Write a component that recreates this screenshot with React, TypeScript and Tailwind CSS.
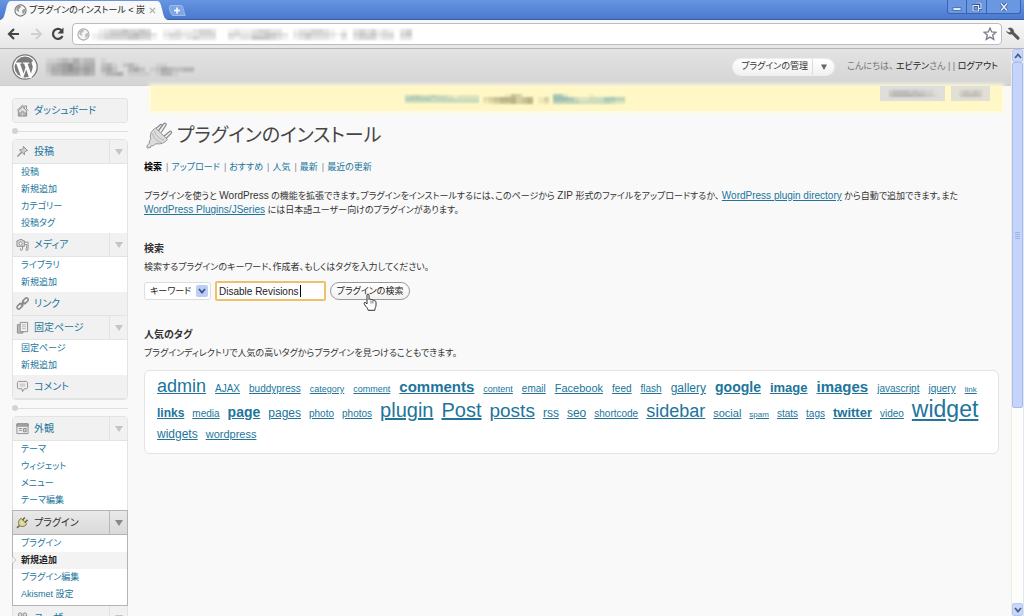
import React from "react";

const LINK = "text-[#21759b]";

/* ---------- icons ---------- */

function Globe({ faded = false }: { faded?: boolean }) {
  return (
    <svg viewBox="0 0 14 14" className="size-[13px] shrink-0" aria-hidden="true">
      <circle cx="7" cy="7" r="6" fill="#f4f4f4" stroke={faded ? "#aaa" : "#777"} strokeWidth="1.2" />
      <path d="M2.6 3.2 5.4 1.6 7.6 2.4 6.6 4.6 4.6 5.4 5.6 7 4.8 8.6 2.6 6.8ZM9 6.500 11.4 5.200 12.2 7 11 9.800 9.400 10.800 8.800 9Z" fill={faded ? "#bbb" : "#999"} />
    </svg>
  );
}

function WordPressLogo() {
  return (
    <svg viewBox="0 0 26 26" className="size-[26px] shrink-0" aria-hidden="true">
      <circle cx="13" cy="13" r="12.2" fill="#fdfdfd" stroke="#777" strokeWidth="1.3" />
      <circle cx="13" cy="13" r="10.4" fill="#7b7b7b" />
      <path
        d="M2.6 8.4h7v1.1l-1.5.2 3.4 9.8 2-6-1.4-3.8-1.3-.2V8.4h6.6v1.1l-1.8.2 3.4 9.8 1.5-5c1-3.2-1.2-4.3-.9-6 .2-1 .9-1.7 2-1.6l2.2 3.6c.4 1.8 0 3.6-.8 5.6l-3.6 8h-2.2L14.200 15.400 11.300 23.600H9.300L4.300 9.700l-1.700-.200Z"
        fill="#fdfdfd"
      />
    </svg>
  );
}

type IconName = "home" | "pin" | "media" | "link" | "pages" | "comment" | "layout" | "plug" | "users";

function MenuIcon({ name }: { name: IconName }) {
  const paths: Record<IconName, React.ReactNode> = {
    home: (
      <>
        <path d="M1 7 7 1.300 9.500 3.600V2h1.800v3.200L13 7" fill="none" />
        <path d="M2.500 7 7 2.800 11.500 7v6h-9Z" fill="#ddd" />
        <path d="M5.500 13V8.500h3V13M4 13V9M10 13V9" fill="none" />
      </>
    ),
    pin: (
      <>
        <path d="M8 1.500 12.500 6 11 6.300 9.300 8 9 10.500 3.800 5.200 6.300 4.900 7.900 3.200Z" fill="#ccc" />
        <path d="M6 7.800 1.500 12.500" fill="none" strokeWidth="1.400" />
      </>
    ),
    media: (
      <>
        <path d="M1 3h2l.6-1.300h3L7.200 3H9v6H1Z" fill="#ddd" />
        <circle cx="5" cy="6" r="1.800" fill="#fff" />
        <path d="M9 4.500h4v7.700a1.200 1.200 0 1 1-1.500-1.200V7H9M7 9v3.200a1.200 1.200 0 1 1-1.500-1.200" fill="none" />
      </>
    ),
    link: (
      <g fill="none" strokeWidth="1.700">
        <rect x="6.600" y="2.200" width="7" height="3.800" rx="1.900" transform="rotate(-45 10.100 4.100)" />
        <rect x="0.600" y="8" width="7" height="3.800" rx="1.900" transform="rotate(-45 4.100 9.900)" />
        <path d="m5 9 4-4" />
      </g>
    ),
    pages: (
      <>
        <path d="M1.500 4h6v9h-6Z" fill="#bbb" />
        <path d="M4.500 1.500h8v10h-8Z" fill="#eee" />
        <path d="M6.500 4h4M6.500 6h4M6.500 8h4" fill="none" stroke="#bbb" />
      </>
    ),
    comment: (
      <>
        <path d="M2.500 1.500h9l1 1v6l-1 1H9l-2 3-.6-3H2.500l-1-1v-6Z" fill="#eee" />
        <path d="M4 4.500h6M4 6.500h6" fill="none" stroke="#bbb" />
      </>
    ),
    layout: (
      <>
        <path d="M1 2h12v10.500H1Z" fill="#eee" />
        <path d="M1 2h12v2.500H1Z" fill="#aaa" />
        <path d="M8 7h3v3.500H8Z" fill="#ccc" />
        <path d="M3 7h3.500M3 9h3.500" fill="none" />
      </>
    ),
    plug: (
      <g stroke="#6b6844">
        <path d="M5.500 2.500 11.500 8.500C9.500 11.500 6 12 3.800 10.200 2 8 2.500 4.500 5.500 2.500Z" fill="#e3dc9a" />
        <path d="M7 4.500 9.500 1.500M9.500 7 12.500 4.200M3.800 10.200 1 12.800" fill="none" strokeWidth="1.700" />
      </g>
    ),
    users: (
      <>
        <circle cx="4.500" cy="4" r="2" fill="#ddd" />
        <circle cx="9.500" cy="4" r="2" fill="#ddd" />
        <path d="M1.500 12V8h5v4M7.500 12V8h5v4" fill="#ddd" />
      </>
    ),
  };
  return (
    <svg viewBox="0 0 14 14" className="size-[13px] shrink-0" stroke="#8a8a8a" strokeWidth="1" aria-hidden="true">
      {paths[name]}
    </svg>
  );
}

function PlugHeading() {
  return (
    <svg viewBox="0 0 27 27" className="size-[27px] shrink-0" aria-hidden="true">
      <path d="M12.500 9 18 1.500c1-1 2.800.3 2 1.600l-4.800 7.400M17.500 14.500l6.200-5c1.200-.8 2.500.7 1.500 1.800L19.500 17M9.500 7l5-4.500c1-.6 2 .4 1.400 1.400L12 9" fill="#f3f3f3" stroke="#8a8a8a" strokeWidth="1.200" />
      <path d="M9.500 6 21.500 17.500c-3 3.500-7 5-11.500 4.200L7.500 23.500l-2.500.5-.5 1.500L1 26l.3-2.800 1.900-1.600.5-3.300 1-1C3.500 12.500 5.500 8.500 9.500 6Z" fill="#dcdcdc" stroke="#959595" strokeWidth="1" />
      <path d="M6.500 11.500c1 4.500 4.500 8 9 9M8.500 9c1 4.500 5 8 9.500 9" fill="none" stroke="#b2b2b2" />
    </svg>
  );
}

/* Pixelated strips: each digit is the darkness of one block. */
function Mosaic({ rows, color, className }: { rows: string[]; color: string; className: string }) {
  const cols = rows[0].length;
  return (
    <svg viewBox={`0 0 ${cols} ${rows.length}`} preserveAspectRatio="none" className={className} shapeRendering="crispEdges" aria-hidden="true">
      {rows.flatMap((row, y) =>
        row.split("").map((d, x) =>
          d === "0" ? null : <rect key={`${x}-${y}`} x={x} y={y} width="1" height="1" fill={color} opacity={Number(d) / 10} />,
        ),
      )}
    </svg>
  );
}

/* ---------- browser chrome ---------- */

function TitleBar() {
  return (
    <div className="flex h-5 shrink-0 items-start justify-between border-b border-[#3a5f9f] bg-gradient-to-b from-[#6795e2] to-[#4a79cf]">
      <div className="relative z-10 flex h-5">
        <svg viewBox="0 0 168 20" className="absolute left-0 top-0 h-5 w-[168px]" aria-hidden="true">
          <path d="M0 20C4 19 4.500 15 6 9 7.500 3 8 1.500 11 1h146c3 .5 3.500 2 5 8 1.500 6 2 10 6 11Z" fill="#f8f8f8" />
        </svg>
        <div className="relative flex h-5 w-[168px] items-center pl-[14px]">
          <Globe />
          <span className="ml-[2px] w-[116px] overflow-hidden whitespace-nowrap text-[9px] leading-4 text-[#222]">プラグインのインストール &lt; 炭酸</span>
          <button aria-label="タブを閉じる" className="ml-1 text-[#aaa]">
            <svg viewBox="0 0 8 8" className="size-[7px]"><path d="m1 1 6 6M7 1 1 7" stroke="currentColor" strokeWidth="1.400" /></svg>
          </button>
        </div>
        <button aria-label="新しいタブ" className="relative mt-[5px] h-[11px] w-[18px]">
          <svg viewBox="0 0 18 11" className="h-[11px] w-[18px]">
            <path d="M2.500.5h11c1.500 0 3 10 4 10H5C2.500 10.500 0 .5 2.500.5Z" fill="#7ea5e6" stroke="#a9c4f0" strokeWidth=".8" />
            <path d="M9 2.500v6M6 5.500h6" stroke="#fff" strokeWidth="1.600" />
          </svg>
        </button>
      </div>
      <div className="mr-[3px] flex h-[14px] divide-x divide-[#3a62ad] rounded-b-[3px] border border-t-0 border-[#3a62ad] bg-[#6a97e2] text-[#e8effc]">
        <button aria-label="最小化" className="flex w-[19px] items-center justify-center">
          <svg viewBox="0 0 10 10" className="size-[10px]"><path d="M1 5.500h8v3H1Z" fill="#dfe9fb" stroke="#3f63a5" strokeWidth=".8" /></svg>
        </button>
        <button aria-label="元に戻す" className="flex w-5 items-center justify-center">
          <svg viewBox="0 0 10 10" className="size-[10px]"><path d="M3.500 1H9v5.500H7M1 3.500h5.500V9H1Z" fill="none" stroke="#2f5296" strokeWidth="2.400" /><path d="M3.500 1H9v5.500H7M1 3.500h5.500V9H1Z" fill="none" stroke="#e3ecfc" strokeWidth="1.200" /></svg>
        </button>
        <button aria-label="閉じる" className="flex w-[33px] items-center justify-center">
          <svg viewBox="0 0 10 10" className="size-[10px]"><path d="m2 1.500 6 7M8 1.500l-6 7" stroke="#2f5296" strokeWidth="3" /><path d="m2 1.500 6 7M8 1.500l-6 7" stroke="#e3ecfc" strokeWidth="1.700" /></svg>
        </button>
      </div>
    </div>
  );
}

function Toolbar() {
  return (
    <div className="flex h-[29px] shrink-0 items-center border-b border-[#b5b5b5] bg-gradient-to-b from-[#f8f8f8] to-[#e6e6e6] pl-[7px] pr-1">
      <button aria-label="戻る" className="w-[22px]">
        <svg viewBox="0 0 14 12" className="h-3 w-[14px]"><path d="M7 1 2 6l5 5M2.500 6H12" fill="none" stroke="#444" strokeWidth="2.200" /></svg>
      </button>
      <button aria-label="進む" className="w-[22px]">
        <svg viewBox="0 0 14 12" className="h-3 w-[14px]"><path d="m7 1 5 5-5 5M11.500 6H2" fill="none" stroke="#d0d0d0" strokeWidth="2" /></svg>
      </button>
      <button aria-label="再読み込み" className="w-[21px]">
        <svg viewBox="0 0 14 14" className="size-[14px]"><path d="M11.500 9A5 5 0 1 1 10.500 3.300" fill="none" stroke="#444" strokeWidth="2.200" /><path d="M12.500.5v6h-6Z" fill="#444" /></svg>
      </button>
      <div className="flex h-[22px] flex-1 items-center rounded-[4px] border border-[#bdbdbd] bg-white pl-1 pr-1">
        <Globe faded />
        <Mosaic
          className="ml-[2px] h-[11px] w-[320px] blur-[1px]"
          color="#777"
          rows={["012334334300112112332001211233220012233210102323121023", "123444454420233222333003322334432023433321303434233034", "123333443310122123222002122444321012322210202333122022"]}
        />
        <span className="flex-1" />
        <button aria-label="ブックマーク">
          <svg viewBox="0 0 14 14" className="size-[14px]"><path d="m7 1 1.700 4 4.300.3-3.300 2.800 1.100 4.300L7 10.100l-3.800 2.300 1.100-4.300L1 5.300 5.300 5Z" fill="#fff" stroke="#7b7b8b" strokeWidth="1.300" /></svg>
        </button>
      </div>
      <button aria-label="設定" className="ml-1">
        <svg viewBox="0 0 14 14" className="size-[14px]"><path d="M2.200 1.500 5 4l-.8 1.500H1L.8 4.200C1.500 6.800 4 7.600 6 6.900l5 5.300c1.600.7 2.700-.4 2-2L7.800 5.300C8 3 6.500 1 4.200.9Z" fill="#555" stroke="#555" strokeWidth=".6" /></svg>
      </button>
    </div>
  );
}

function Scrollbar() {
  const arrow = "flex h-[13px] shrink-0 items-center justify-center rounded-[2px] border border-[#b5c8f0] bg-[#c8d7fb]";
  return (
    <div className="flex w-[13px] shrink-0 flex-col border-l border-r border-l-[#ececec] border-r-[#dfe8fb] bg-[#fdfdf9]">
      <button aria-label="上へ" className={arrow}>
        <svg viewBox="0 0 8 6" className="h-[6px] w-2"><path d="m1 5 3-3.500L7 5" fill="none" stroke="#4d6185" strokeWidth="1.800" /></svg>
      </button>
      <div className="flex min-h-0 flex-1 flex-col">
        <div className="flex h-[64%] items-center justify-center rounded-[2px] border border-[#a9bdec] bg-[#c4d4fb]">
          <svg viewBox="0 0 5 7" className="h-[7px] w-[5px]"><path d="M0 .5h5M0 2.500h5M0 4.500h5M0 6.500h5" stroke="#9db4ea" /></svg>
        </div>
      </div>
      <button aria-label="下へ" className={arrow}>
        <svg viewBox="0 0 8 6" className="h-[6px] w-2"><path d="m1 1 3 3.500L7 1" fill="none" stroke="#4d6185" strokeWidth="1.800" /></svg>
      </button>
    </div>
  );
}

/* ---------- admin header ---------- */

function AdminHeader() {
  return (
    <header className="flex h-[37px] shrink-0 items-center border-b border-[#cfcfcf] bg-gradient-to-b from-[#e3e3e3] to-[#d4d4d4] pl-3 pr-[13px] text-[9px]">
      <WordPressLogo />
      <Mosaic
        className="ml-2 h-[18px] w-[148px] blur-[1px]"
        color="#666"
        rows={["112324233010000000000000000", "234564344023102310001100000", "244565454034200342012432233", "133444343013340111101331000"]}
      />
      <span className="flex-1" />
      <div className="flex h-[18px] items-center rounded-full border border-[#eee] bg-gradient-to-b from-white to-[#f1f1f1]">
        <a href="#manage" className="w-[79px] whitespace-nowrap pl-2 text-[#333]">プラグインの管理</a>
        <button aria-label="お気に入りを開く" className="flex h-4 w-[22px] items-center justify-center border-l border-[#ddd]">
          <svg viewBox="0 0 6 6" className="size-[6px]"><path d="M0 .5h6L3 6Z" fill="#666" /></svg>
        </button>
      </div>
      <p className="ml-3 whitespace-nowrap text-[#777]">
        こんにちは、 <a href="#profile" className="text-[#222]">エビテン</a>さん | | <a href="#logout" className="text-[#222]">ログアウト</a>
      </p>
    </header>
  );
}

/* ---------- sidebar ---------- */

type Section = { icon: IconName; title: string; items?: string[]; active?: boolean; current?: string };

function MenuHead({ icon, title, items, active }: Section) {
  return (
    <div className={active ? "flex h-[25px] items-center border-y border-[#b3b3b3] bg-gradient-to-b from-[#e9e9e9] to-[#dadada] pl-[3px]" : "flex h-6 items-center border-b border-[#e3e3e3] bg-[#f1f1f1] pl-[3px]"}>
      <MenuIcon name={icon} />
      <a href={`#${icon}`} className={`ml-[5px] flex-1 whitespace-nowrap text-[10px] leading-4 ${active ? "text-[#333]" : LINK}`}>{title}</a>
      {items && (
        <button aria-label={`${title}を開閉`} className={`flex h-full w-[18px] items-center justify-center border-l ${active ? "border-[#b9b9b9] text-[#888]" : "border-[#e2e2e2] text-[#c4c4c4]"}`}>
          <svg viewBox="0 0 8 6" className="h-[6px] w-2"><path d="M0 0h8L4 6Z" fill="currentColor" /></svg>
        </button>
      )}
    </div>
  );
}

function MenuSection(s: Section) {
  return (
    <li className={s.active ? "-mx-px border-x border-b border-[#b3b3b3]" : ""}>
      <MenuHead {...s} />
      {s.items && (
        <ul className={`bg-white ${s.active ? "pb-[2px]" : "pb-px"}`}>
          {s.items.map((t) => {
            const on = s.current === t;
            return (
              <li key={t} className={`relative h-[17px] pl-2 text-[9px] leading-[17px] ${on ? "bg-[#f3f3f3]" : ""}`}>
                {on && (
                  <svg viewBox="0 0 5 8" className="absolute -left-px top-1 h-2 w-[5px]" aria-hidden="true"><path d="M0 0 4 4 0 8Z" fill="#f9f9f9" stroke="#b9b9b9" strokeWidth=".8" /></svg>
                )}
                <a href={`#${s.icon}`} className={on ? "font-bold text-[#222]" : LINK}>{t}</a>
              </li>
            );
          })}
        </ul>
      )}
    </li>
  );
}

function Separator() {
  return (
    <div className="flex h-4 items-center">
      <span className="size-[6px] rounded-full bg-[#d3d3d3]" />
      <span className="h-px flex-1 bg-[#dfdfdf]" />
    </div>
  );
}

const CONTENT_MENU: Section[] = [
  { icon: "pin", title: "投稿", items: ["投稿", "新規追加", "カテゴリー", "投稿タグ"] },
  { icon: "media", title: "メディア", items: ["ライブラリ", "新規追加"] },
  { icon: "link", title: "リンク" },
  { icon: "pages", title: "固定ページ", items: ["固定ページ", "新規追加"] },
  { icon: "comment", title: "コメント" },
];

const SITE_MENU: Section[] = [
  { icon: "layout", title: "外観", items: ["テーマ", "ウィジェット", "メニュー", "テーマ編集"] },
  { icon: "plug", title: "プラグイン", items: ["プラグイン", "新規追加", "プラグイン編集", "Akismet 設定"], active: true, current: "新規追加" },
  { icon: "users", title: "ユーザー", items: [] },
];

function Sidebar() {
  const box = "rounded-[4px] border border-[#e3e3e3]";
  return (
    <nav className="ml-3 w-[116px] shrink-0 pt-3">
      <div className="overflow-hidden rounded-[4px] border border-b-0 border-[#e3e3e3]">
        <MenuHead icon="home" title="ダッシュボード" />
      </div>
      <Separator />
      <ul className={box}>{CONTENT_MENU.map((s) => <MenuSection key={s.title} {...s} />)}</ul>
      <Separator />
      <ul className={box}>{SITE_MENU.map((s) => <MenuSection key={s.title} {...s} />)}</ul>
    </nav>
  );
}

/* ---------- main column ---------- */

type Tag = [name: string, style: string];

const TAGS_A_L: Tag[] = [
  ["admin", "text-[18px]"], ["AJAX", "text-[10px]"], ["buddypress", "text-[10px]"], ["category", "text-[9px]"],
  ["comment", "text-[9px]"], ["comments", "text-[15px] font-bold"], ["content", "text-[9px]"], ["email", "text-[10px]"],
  ["Facebook", "text-[11px]"], ["feed", "text-[10px]"], ["flash", "text-[10px]"], ["gallery", "text-[12px]"],
  ["google", "text-[14px] font-bold"], ["image", "text-[13px] font-bold"], ["images", "text-[15px] font-bold"],
  ["javascript", "text-[10px]"], ["jquery", "text-[10px]"], ["link", "text-[8px]"],
];

const TAGS_L_W: Tag[] = [
  ["links", "text-[12px] font-bold"], ["media", "text-[10px]"], ["page", "text-[14px] font-bold"], ["pages", "text-[12px]"],
  ["photo", "text-[10px]"], ["photos", "text-[10px]"], ["plugin", "text-[20px]"], ["Post", "text-[20px]"],
  ["posts", "text-[19px]"], ["rss", "text-[12px]"], ["seo", "text-[12px]"], ["shortcode", "text-[10px]"],
  ["sidebar", "text-[18px]"], ["social", "text-[11px]"], ["spam", "text-[8px]"], ["stats", "text-[10px]"],
  ["tags", "text-[10px]"], ["twitter", "text-[13px] font-bold"], ["video", "text-[10px]"], ["widget", "text-[23px]"],
  ["widgets", "text-[12px]"], ["wordpress", "text-[11px]"],
];

function TagGroup({ tags, gap }: { tags: Tag[]; gap: string }) {
  return (
    <div className={`flex flex-wrap items-baseline gap-y-[3px] ${gap}`}>
      {tags.map(([name, style]) => (
        <a key={name} href={`#tag-${name}`} className={`${style} ${LINK} leading-4 underline`}>{name}</a>
      ))}
    </div>
  );
}

function Notice() {
  return (
    <div className="relative -mr-[3px] ml-[7px]">
      <div className="flex h-[25px] items-center justify-center bg-[#fff8c6] pr-[124px] shadow-[0_0_4px_2px_#fffbdc]">
        <div className="flex items-center gap-1 blur-[1px]">
          <Mosaic className="h-[8px] w-[74px]" color="#5a9aa5" rows={["34433433212222", "55555344433333", "33333333333333"]} />
          <Mosaic className="h-[10px] w-[66px]" color="#77704a" rows={["000014300000", "234555345013", "123445345012"]} />
          <Mosaic className="h-[10px] w-[72px]" color="#5a9aa5" rows={["55200001000000", "66653223335544", "44444333334322"]} />
        </div>
      </div>
      <div className="absolute right-3 top-0 flex gap-[6px]">
        <div className="flex h-[15px] w-[65px] items-center justify-center bg-[#dededa]"><Mosaic className="h-[7px] w-[48px] blur-[1px]" color="#777" rows={["233332322110", "344444343221"]} /></div>
        <div className="flex h-[15px] w-[39px] items-center justify-center bg-[#e2e0d6]"><Mosaic className="h-[7px] w-[22px] blur-[1px]" color="#888" rows={["23232", "34443"]} /></div>
      </div>
    </div>
  );
}

function HandCursor() {
  return (
    <svg viewBox="0 0 14 18" className="pointer-events-none absolute left-[33px] top-[11px] h-[18px] w-[14px]" aria-hidden="true">
      <path d="M4 9V2c0-1.300 2-1.300 2 0v4.500c.3-.8 2-.7 2 .4.400-.7 1.900-.5 1.900.500.500-.6 1.900-.3 1.900.700 0 0 1.200-.2 1.200 1v3c0 2-1.200 2.600-1.200 5.200H5.200c0-2-2.600-3.600-3.900-6.200-.7-1.500.6-2.300 1.500-1.300L4 11Z" fill="#fff" stroke="#333" strokeWidth="1" strokeLinejoin="round" />
      <path d="M8 7.500v3M9.900 8v2.500" stroke="#555" strokeWidth=".8" />
    </svg>
  );
}

function Main() {
  const views = ["アップロード", "おすすめ", "人気", "最新", "最近の更新"];
  return (
    <main className="ml-4 mr-3 min-w-0 flex-1 text-[9px] leading-[13px] text-[#333]">
      <Notice />
      <div className="mt-[11px] flex items-center gap-1 pl-[2px]">
        <PlugHeading />
        <h1 className="whitespace-nowrap text-[19px] leading-[27px] text-[#464646]">プラグインのインストール</h1>
      </div>
      <ul className="mt-3 flex">
        <li><a href="#search" className="font-bold text-black">検索</a></li>
        {views.map((v) => (
          <li key={v}><span className="pl-1 pr-[3px] text-[#888]">|</span><a href="#view" className={LINK}>{v}</a></li>
        ))}
      </ul>
      <p className="mt-[15px]">
        プラグインを使うと <span className="text-[10px]">WordPress</span> の機能を拡張できます。プラグインをインストールするには、このページから <span className="text-[10px]">ZIP</span> 形式のファイルをアップロードするか、{" "}
        <a href="#directory" className={`${LINK} text-[10px] underline`}>WordPress plugin directory</a> から自動で追加できます。また{" "}
        <a href="#jseries" className={`${LINK} text-[10px] underline`}>WordPress Plugins/JSeries</a> には日本語ユーザー向けのプラグインがあります。
      </p>
      <h2 className="mt-6 text-[10px] font-bold leading-4">検索</h2>
      <p className="mt-1">検索するプラグインのキーワード、作成者、もしくはタグを入力してください。</p>
      <form className="mt-[7px] flex items-center gap-1" onSubmit={(e) => e.preventDefault()}>
        <div className="relative">
          <select aria-label="検索の種類" className="h-[18px] w-[67px] appearance-none rounded-[3px] border border-[#ddd] bg-white pl-[5px] text-[9px] leading-4 text-[#222]">
            <option>キーワード</option>
          </select>
          <span className="pointer-events-none absolute right-[3px] top-[3px] flex size-3 items-center justify-center rounded-[2px] bg-[#bccdf7]">
            <svg viewBox="0 0 8 6" className="h-[6px] w-2"><path d="m1 1 3 3.500L7 1" fill="none" stroke="#3c5688" strokeWidth="1.800" /></svg>
          </span>
        </div>
        <div className="relative">
          <input aria-label="検索キーワード" defaultValue="Disable Revisions" className="h-5 w-[111px] rounded-[2px] border-2 border-[#efc06a] bg-white pl-[2px] text-[10px] text-[#222] outline-none" />
          <span className="absolute left-[85px] top-1 h-3 w-px bg-black" />
        </div>
        <div className="relative">
          <button className="h-[18px] w-20 whitespace-nowrap rounded-full border border-[#999] bg-gradient-to-b from-white to-[#f2f2f2] text-[9px] leading-4 text-[#222]">プラグインの検索</button>
          <HandCursor />
        </div>
      </form>
      <h2 className="mt-[26px] text-[10px] font-bold leading-4">人気のタグ</h2>
      <p className="mt-1">プラグインディレクトリで人気の高いタグからプラグインを見つけることもできます。</p>
      <div className="mt-[10px] flex flex-col gap-[3px] rounded-[6px] border border-[#e3e3e3] bg-white px-3 pb-[11px] pt-[7px]">
        <TagGroup tags={TAGS_A_L} gap="gap-x-[9px]" />
        <TagGroup tags={TAGS_L_W} gap="gap-x-2" />
      </div>
    </main>
  );
}

export default function App() {
  return (
    <div lang="ja" className="flex h-screen flex-col overflow-hidden bg-[#f9f9f9] font-['Liberation_Sans','Noto_Sans_CJK_JP',sans-serif] [font-feature-settings:'palt']">
      <TitleBar />
      <Toolbar />
      <div className="flex min-h-0 flex-1">
        <div className="flex min-w-0 flex-1 flex-col overflow-hidden">
          <AdminHeader />
          <div className="flex min-h-0 flex-1 items-start">
            <Sidebar />
            <Main />
          </div>
        </div>
        <Scrollbar />
      </div>
    </div>
  );
}
